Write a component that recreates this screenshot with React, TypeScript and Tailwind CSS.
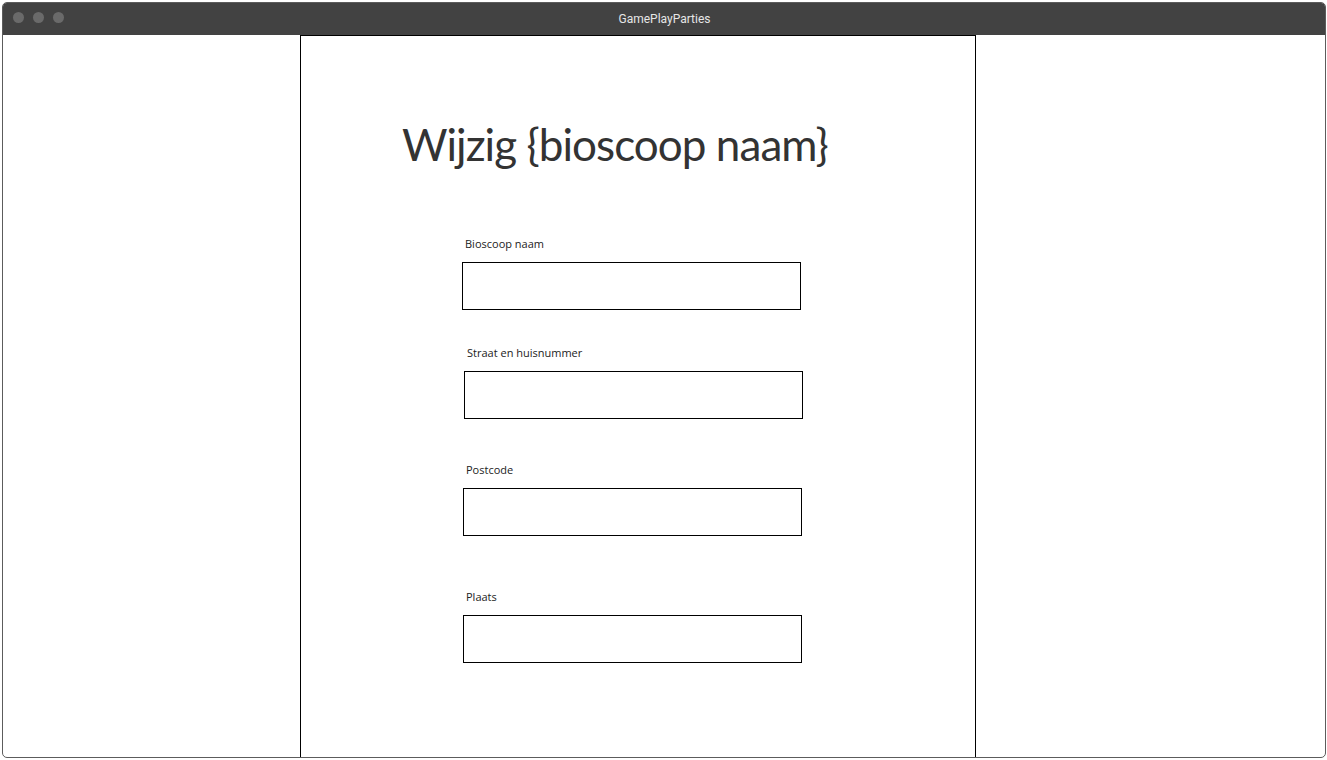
import React from "react";

function Field({ label, ml, mt, lblMl }: { label: string; ml: string; mt: string; lblMl: string }) {
  return (
    <div className={`flex flex-col ${mt}`}>
      <div className={`text-[11px] leading-[14px] text-[#222] ${lblMl}`} style={{ fontFamily: '"Open Sans", sans-serif' }}>
        {label}
      </div>
      <div className={`mt-[11px] h-[48px] w-[339px] border border-black bg-white ${ml}`} />
    </div>
  );
}

export default function App() {
  return (
    <div className="h-[760px] w-[1327px] bg-white p-[2px]">
      <div className="flex h-[756px] w-[1324px] flex-col overflow-hidden rounded-[5px] border border-[#5c5c5c]">
        <div className="relative flex h-[32px] shrink-0 items-center justify-center bg-[#424242]">
          <div className="absolute left-[10px] top-[9px] flex gap-[9px]">
            <div className="h-[11px] w-[11px] rounded-full bg-[#6a6a6a]" />
            <div className="h-[11px] w-[11px] rounded-full bg-[#6a6a6a]" />
            <div className="h-[11px] w-[11px] rounded-full bg-[#6a6a6a]" />
          </div>
          <span className="ml-[1px] text-[12px] text-[#e6e6e6]" style={{ fontFamily: "Roboto, sans-serif" }}>
            GamePlayParties
          </span>
        </div>
        <div className="flex flex-1 justify-start">
          <div className="ml-[297px] flex h-full w-[676px] flex-col border border-b-0 border-black">
            <h1
              className="ml-[101px] mt-[80px] text-[44px] leading-[56px] tracking-[-0.95px] text-[#333]"
              style={{ fontFamily: "Lato, sans-serif" }}
            >
              Wijzig {"{bioscoop naam}"}
            </h1>
            <div className="ml-[161px] mt-[65px] flex flex-col">
              <Field label="Bioscoop naam" mt="mt-0" ml="ml-0" lblMl="ml-[3px]" />
              <Field label="Straat en huisnummer" mt="mt-[36px]" ml="ml-[2px]" lblMl="ml-[5px]" />
              <Field label="Postcode" mt="mt-[44px]" ml="ml-[1px]" lblMl="ml-[4px]" />
              <Field label="Plaats" mt="mt-[54px]" ml="ml-[1px]" lblMl="ml-[4px]" />
            </div>
          </div>
        </div>
      </div>
    </div>
  );
}
